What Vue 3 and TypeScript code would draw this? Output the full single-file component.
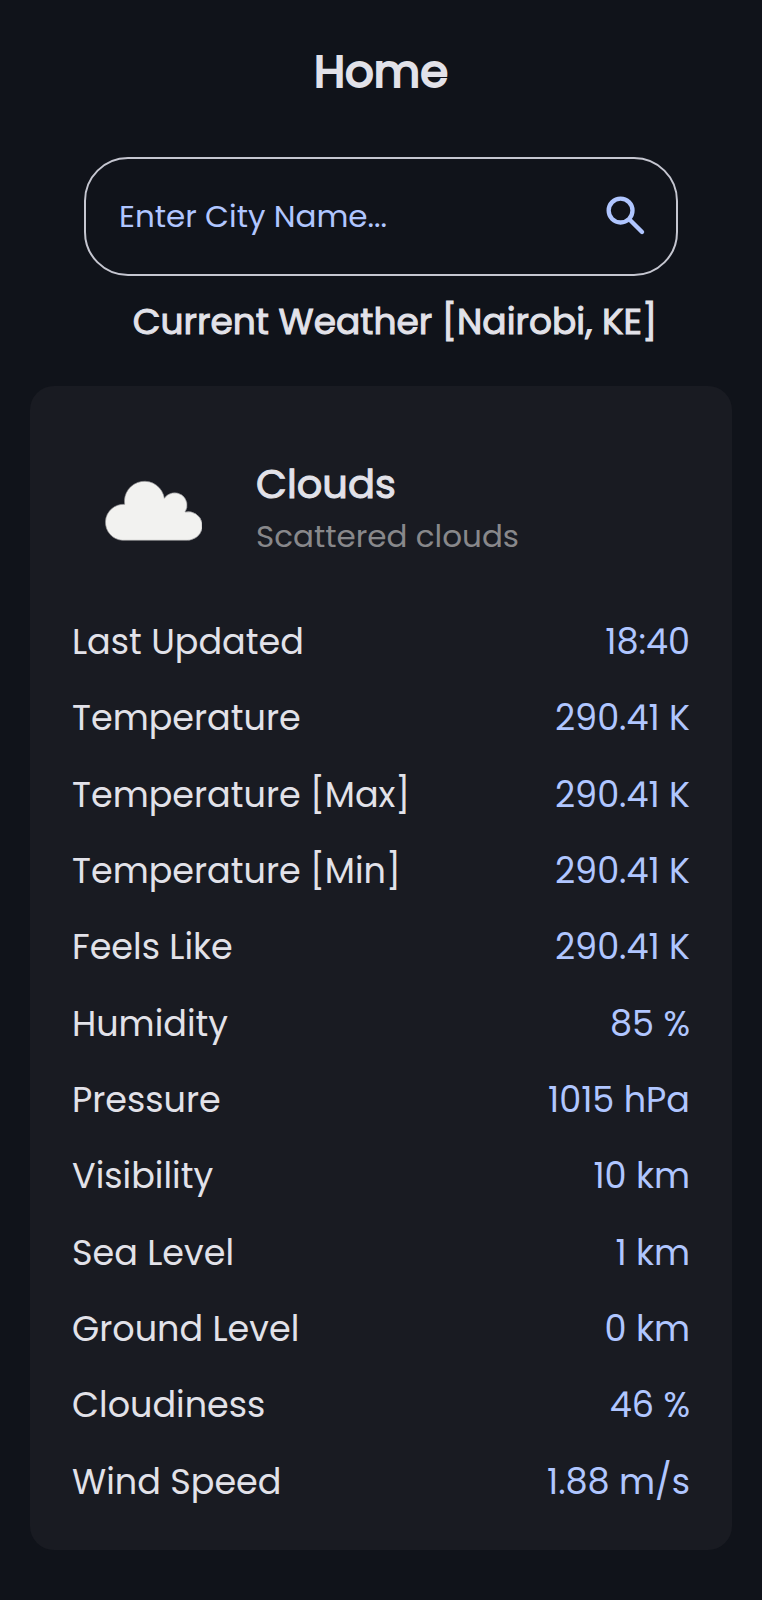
<script setup lang="ts">
import { ref } from 'vue'

interface Reading {
  label: string
  value: string
}

const city = ref('')

const readings: Reading[] = [
  { label: 'Last Updated', value: '18:40' },
  { label: 'Temperature', value: '290.41 K' },
  { label: 'Temperature [Max]', value: '290.41 K' },
  { label: 'Temperature [Min]', value: '290.41 K' },
  { label: 'Feels Like', value: '290.41 K' },
  { label: 'Humidity', value: '85 %' },
  { label: 'Pressure', value: '1015 hPa' },
  { label: 'Visibility', value: '10 km' },
  { label: 'Sea Level', value: '1 km' },
  { label: 'Ground Level', value: '0 km' },
  { label: 'Cloudiness', value: '46 %' },
  { label: 'Wind Speed', value: '1.88 m/s' },
]
</script>

<template>
  <main class="page">
    <h1 class="title">Home</h1>

    <form class="search" role="search" @submit.prevent>
      <input
        v-model="city"
        class="search-input"
        type="text"
        aria-label="City name"
        placeholder="Enter City Name..."
      />
      <button class="search-button" type="submit" aria-label="Search">
        <svg class="search-icon" viewBox="0 0 24 24" aria-hidden="true">
          <circle cx="9.5" cy="9.5" r="5.5" />
          <path d="M13.6 13.6L19.4 19.4" />
        </svg>
      </button>
    </form>

    <h2 class="place">Current Weather [Nairobi, KE]</h2>

    <section class="card">
      <header class="summary">
        <svg class="cloud" viewBox="0 0 294 186" aria-hidden="true">
          <path
            d="M55 184A54 54 0 1 1 62 76A60 60 0 1 1 181 58A37 37 0 0 1 243 99A42 42 0 0 1 262 182Q256 184 250 184Z"
          />
        </svg>
        <div class="summary-text">
          <h3 class="condition">Clouds</h3>
          <p class="detail">Scattered clouds</p>
        </div>
      </header>

      <table class="readings">
        <tbody>
          <tr v-for="reading in readings" :key="reading.label">
            <th scope="row">{{ reading.label }}</th>
            <td>{{ reading.value }}</td>
          </tr>
        </tbody>
      </table>
    </section>
  </main>
</template>

<style>
body {
  margin: 0;
  background: #10131a;
}
</style>

<style scoped>
.page {
  box-sizing: border-box;
  min-height: 100vh;
  padding: 40px 30px 50px;
  background: #10131a;
  color: #e2e2e9;
  font-family: Poppins, Inter, "Open Sans", sans-serif;
}

.title,
.place,
.condition {
  margin: 0;
  font-weight: 400;
  -webkit-text-stroke: 1px currentColor;
}

.title {
  font-size: 45px;
  line-height: 64px;
  text-align: center;
  -webkit-text-stroke-width: 2px;
}

.search {
  box-sizing: border-box;
  display: flex;
  align-items: center;
  min-height: 119px;
  margin: 53px 54px 0;
  padding: 0 24px 2px 33px;
  border: 2px solid #c5c6d0;
  border-radius: 44px;
}

.search-input {
  flex: 1;
  min-width: 0;
  padding: 0;
  border: 0;
  outline: 0;
  background: transparent;
  color: #b0c6ff;
  font-family: inherit;
  font-size: 31px;
  line-height: 40px;
}

.search-input::placeholder {
  color: #b0c6ff;
  opacity: 1;
}

.search-button {
  display: flex;
  padding: 0;
  border: 0;
  background: transparent;
  cursor: pointer;
}

.search-icon {
  width: 52px;
  height: 52px;
  fill: none;
  stroke: #b0c6ff;
  stroke-width: 2;
  stroke-linecap: round;
}

.place {
  margin-top: 22px;
  padding-left: 28px;
  font-size: 36px;
  line-height: 48px;
  text-align: center;
}

.card {
  margin-top: 40px;
  padding: 72px 42px 30px;
  border-radius: 24px;
  background: #191b22;
}

.summary {
  display: flex;
  align-items: center;
  gap: 54px;
  padding-left: 32px;
}

.cloud {
  flex: none;
  width: 98px;
  height: 62px;
  fill: #f2f2f0;
  stroke: #8f9092;
  stroke-width: 2;
}

.condition {
  font-size: 40px;
  line-height: 52px;
}

.detail {
  margin: 0;
  color: #88888b;
  font-size: 31px;
  line-height: 52px;
}

.readings {
  width: 100%;
  height: 916px;
  margin-top: 42px;
  border-collapse: collapse;
  font-size: 35px;
  line-height: 48px;
}

.readings th {
  padding: 0;
  font-weight: 400;
  text-align: left;
}

.readings td {
  padding: 0;
  color: #b0c6ff;
  text-align: right;
}
</style>
